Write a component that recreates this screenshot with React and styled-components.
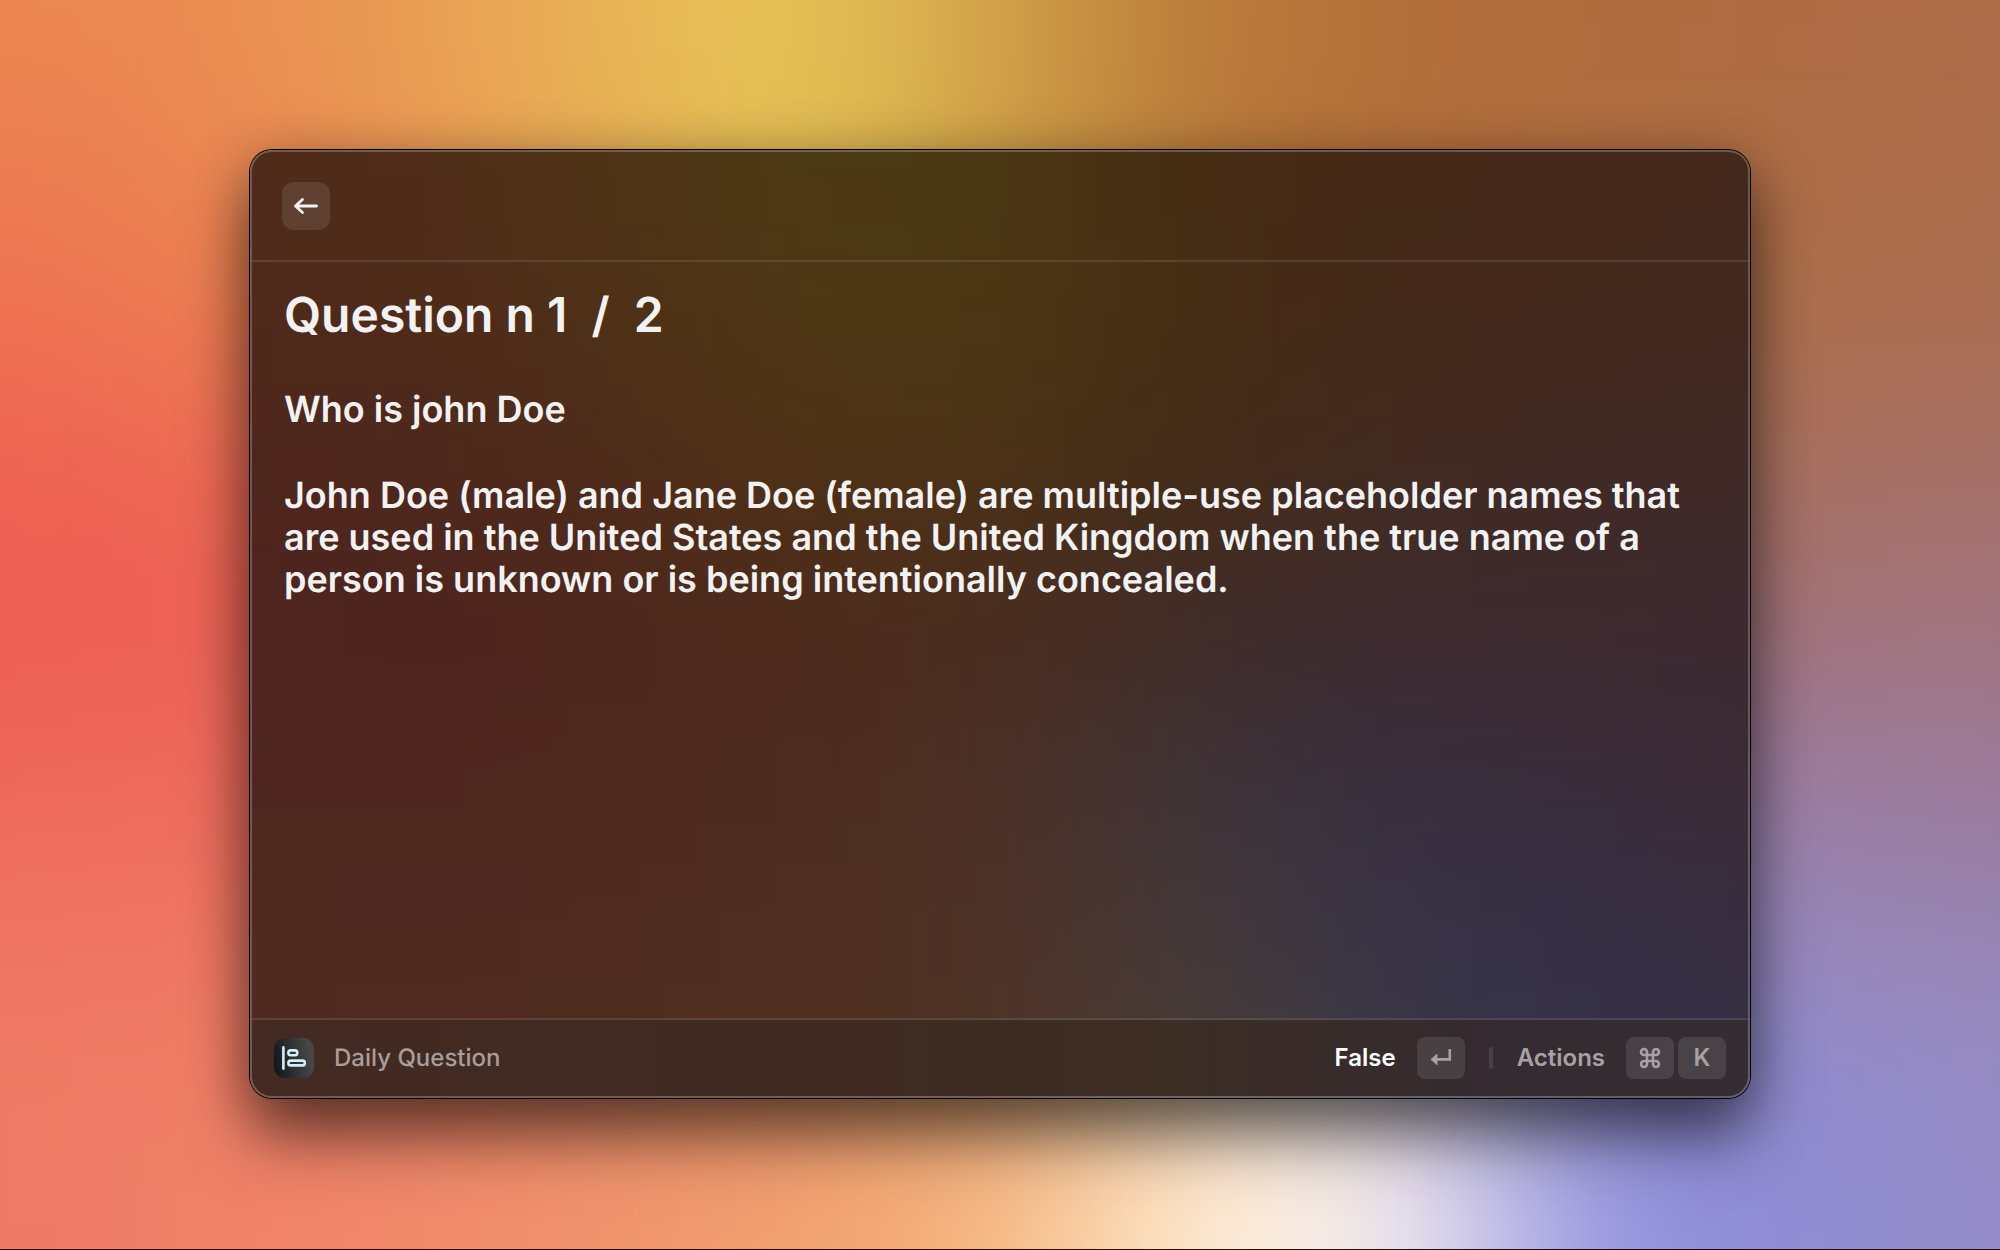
import React from "react";
import styled, { createGlobalStyle } from "styled-components";
import { Command } from "lucide-react";

const GlobalStyle = createGlobalStyle`
  *, *::before, *::after { box-sizing: border-box; }
  body {
    margin: 0;
    font-family: Inter, "Liberation Sans", sans-serif;
    text-rendering: geometricPrecision;
    -webkit-font-smoothing: antialiased;
  }
  button { font: inherit; color: inherit; border: 0; padding: 0; background: none; cursor: pointer; }
`;

/* Colour samples, one string per row, spread evenly from edge to edge. */
const WALLPAPER = [
  "eb8750 ea8a52 e99c54 e8b356 e7c656 cfa049 b97a39 b36e3a b06c3e af6c44 ae6c4a",
  "ec7d52 ea8652 ea9854 e7b055 e5c855 d0a048 b87838 b36e3a b06c40 ae6d46 ac6d4c",
  "ee7052 ec7a52 ea8a52 dca050 d0a850 c09048 b07840 ae7044 ae6e48 ac6e4c aa6e52",
  "ef6253 ee6854 e87454 d88850 c89050 b88450 a87850 a87054 a87058 a87060 a67068",
  "ee5d55 ee5f55 e86c58 d87858 c88058 b88060 a07868 9c7070 a07078 a27278 a0737e",
  "ee685a ee6a5b ec7060 e47c60 d48860 c09068 a88880 9480a0 9478a0 9c7ca0 9b7a9a",
  "ee7461 ef7562 ef7c64 ee8464 e89468 d8a078 c8a890 a098b8 8c84c4 9888b8 9684b4",
  "ef7c66 f07f67 f08468 ef8e6a ef9a6c f0ac76 fce2c4 f0e8ee 8886d4 908bd0 958cc4",
  "ee7967 f08068 f0896b f0946e f1a170 f6b880 fff0d6 f4eef4 9292e0 8e8cd4 958bc6",
];

const GLASS = [
  "4f2b1a 4f2d18 4e3416 4b3b13 493713 462c13 452a17 45291b 43281c",
  "4f291b 4f2b19 4e3117 4d3814 4a3713 462d14 442919 44291c 43291e",
  "4f261e 4e281c 4e2c19 4e3215 4b3216 442b17 422b20 402a25 3f2a27",
  "4e241f 4e231e 4e271e 4e2a1c 4a2d20 412c28 3d2a2e 3e2a2f 3d2930",
  "4f2720 4f2720 4f291f 4e2c20 4b3026 3d3438 382f40 3a2d3c 3b2b35",
  "4f2a20 4f2a21 4f2b20 4f2e20 4d3126 453939 373346 353047 382e40",
  "502b21 502c22 502d21 502f20 4e3326 4a3f36 3a3946 33314b 363043",
];

const MeshSvg = styled.svg`
  position: absolute;
  inset: 0;
  z-index: -1;
  width: 100%;
  height: 100%;
`;

function Mesh({ id, rows }) {
  const grid = rows.map((row) => row.split(" "));
  const lastRow = grid.length - 1;
  const lastCol = grid[0].length - 1;
  const cells = [];
  for (let r = -2; r <= lastRow + 2; r += 1) {
    for (let c = -2; c <= lastCol + 2; c += 1) {
      const color = grid[Math.min(Math.max(r, 0), lastRow)][Math.min(Math.max(c, 0), lastCol)];
      cells.push(
        <rect key={`${r}:${c}`} x={c * 100 - 50} y={r * 100 - 50} width="101" height="101" fill={`#${color}`} />
      );
    }
  }
  return (
    <MeshSvg viewBox={`0 0 ${lastCol * 100} ${lastRow * 100}`} preserveAspectRatio="none" aria-hidden="true">
      <defs>
        <filter
          id={id}
          filterUnits="userSpaceOnUse"
          x="-250"
          y="-250"
          width={lastCol * 100 + 500}
          height={lastRow * 100 + 500}
          colorInterpolationFilters="sRGB"
        >
          <feGaussianBlur stdDeviation="52" />
        </filter>
      </defs>
      <g filter={`url(#${id})`}>{cells}</g>
    </MeshSvg>
  );
}

const Desktop = styled.main`
  position: relative;
  isolation: isolate;
  display: flex;
  min-height: 100vh;
  padding: 150px 12.5vw 151px;
  border-bottom: 1px solid #2c0d05;
  overflow: hidden;
`;

const Panel = styled.section`
  position: relative;
  isolation: isolate;
  flex: 1;
  min-width: 0;
  display: flex;
  flex-direction: column;
  padding: 2px;
  border-radius: 22px;
  box-shadow: 0 0 0 1px #000, 0 40px 64px rgba(0, 0, 0, 0.5), 0 8px 56px rgba(0, 0, 0, 0.28);

  &::after {
    content: "";
    position: absolute;
    inset: 0;
    border-radius: inherit;
    box-shadow: inset 0 0 0 2px rgba(255, 255, 255, 0.22);
    pointer-events: none;
  }
`;

const Glass = styled.div`
  position: absolute;
  inset: 0;
  z-index: -1;
  overflow: hidden;
  border-radius: inherit;
`;

const Header = styled.header`
  display: flex;
  align-items: center;
  height: 110px;
  padding: 0 30px;
  border-bottom: 2px solid rgba(255, 255, 255, 0.1);
`;

const BackButton = styled.button`
  display: grid;
  place-items: center;
  width: 48px;
  height: 48px;
  border-radius: 12px;
  background: rgba(255, 255, 255, 0.1);
  color: #f2f2f2;
`;

const Content = styled.article`
  flex: 1;
  padding: 24px 32px;
  color: #f2f2f2;
`;

const Title = styled.h1`
  margin: 0 0 44px;
  font-size: 48px;
  line-height: 58px;
  font-weight: 600;
  white-space: pre-wrap;
`;

const Statement = styled.h2`
  margin: 0 0 44px;
  font-size: 36px;
  line-height: 42px;
  font-weight: 600;
`;

const Footer = styled.footer`
  display: flex;
  align-items: center;
  justify-content: space-between;
  height: 78px;
  padding: 0 22px;
  border-top: 2px solid rgba(255, 255, 255, 0.1);
  border-radius: 0 0 20px 20px;
  background: linear-gradient(90deg, #432a23, #3f2b22 40%, #3c2d25 62%, #352b2f 80%, #352d34) padding-box;
  font-size: 24px;
  line-height: 30px;
  font-weight: 500;
`;

const Group = styled.div`
  display: flex;
  align-items: center;
  gap: ${(p) => p.$gap}px;
`;

const Source = styled.span`
  color: #a89d9a;
`;

const Action = styled.button`
  display: flex;
  align-items: center;
  gap: 21px;
  font-weight: 600;
  color: ${(p) => (p.$primary ? "#ffffff" : "#a6a1a4")};
`;

const Keys = styled.span`
  display: flex;
  gap: 4px;
`;

const Key = styled.kbd`
  display: grid;
  place-items: center;
  width: 48px;
  height: 42px;
  border-radius: 8px;
  background: rgba(255, 255, 255, 0.1);
  font: inherit;
  color: #a6a1a4;
`;

const Separator = styled.span`
  width: 4px;
  height: 22px;
  border-radius: 2px;
  background: rgba(255, 255, 255, 0.1);
`;

const BackIcon = () => (
  <svg width="26" height="20" viewBox="0 0 26 20" fill="none" stroke="currentColor" strokeWidth="2.8" strokeLinecap="round" strokeLinejoin="round" aria-hidden="true">
    <path d="M23.5 10H2.5M9.5 3.4 2.5 10l7 6.6" />
  </svg>
);

const ReturnIcon = () => (
  <svg width="22" height="20" viewBox="0 0 22 20" aria-hidden="true">
    <path d="M19.8 1V11.4H6" fill="none" stroke="currentColor" strokeWidth="2.6" />
    <path d="M1 11.4 7 6v10.8z" fill="currentColor" stroke="currentColor" strokeWidth="0.8" strokeLinejoin="round" />
  </svg>
);

const AppIcon = () => (
  <svg width="40" height="40" viewBox="0 0 40 40" aria-hidden="true">
    <defs>
      <linearGradient id="app-tile" x1="0" y1="0.6" x2="1" y2="0.4">
        <stop offset="0" stopColor="#15181b" />
        <stop offset="0.9" stopColor="#474747" />
      </linearGradient>
    </defs>
    <rect width="40" height="40" rx="11" fill="url(#app-tile)" />
    <g fill="none" stroke="#d6edfb" strokeWidth="2.6" strokeLinecap="round">
      <path d="M9.4 9.4v21.2" />
      <rect x="14.4" y="12.4" width="8.8" height="4.8" rx="2.2" />
      <rect x="14.4" y="22.6" width="16.4" height="4.8" rx="2.2" />
    </g>
  </svg>
);

export default function App() {
  return (
    <>
      <GlobalStyle />
      <Desktop>
        <Mesh id="wallpaper-blur" rows={WALLPAPER} />
        <Panel>
          <Glass>
            <Mesh id="glass-blur" rows={GLASS} />
          </Glass>
          <Header>
            <BackButton type="button" aria-label="Back">
              <BackIcon />
            </BackButton>
          </Header>
          <Content>
            <Title>{"Question n 1  /  2"}</Title>
            <Statement>Who is john Doe</Statement>
            <Statement>
              John Doe (male) and Jane Doe (female) are multiple-use placeholder names that are used in the
              United States and the United Kingdom when the true name of a person is unknown or is being
              intentionally concealed.
            </Statement>
          </Content>
          <Footer>
            <Group $gap={20}>
              <AppIcon />
              <Source>Daily Question</Source>
            </Group>
            <Group $gap={24}>
              <Action type="button" $primary>
                False
                <Key>
                  <ReturnIcon />
                </Key>
              </Action>
              <Separator />
              <Action type="button">
                Actions
                <Keys>
                  <Key>
                    <Command size={24} strokeWidth={2.6} />
                  </Key>
                  <Key>K</Key>
                </Keys>
              </Action>
            </Group>
          </Footer>
        </Panel>
      </Desktop>
    </>
  );
}
